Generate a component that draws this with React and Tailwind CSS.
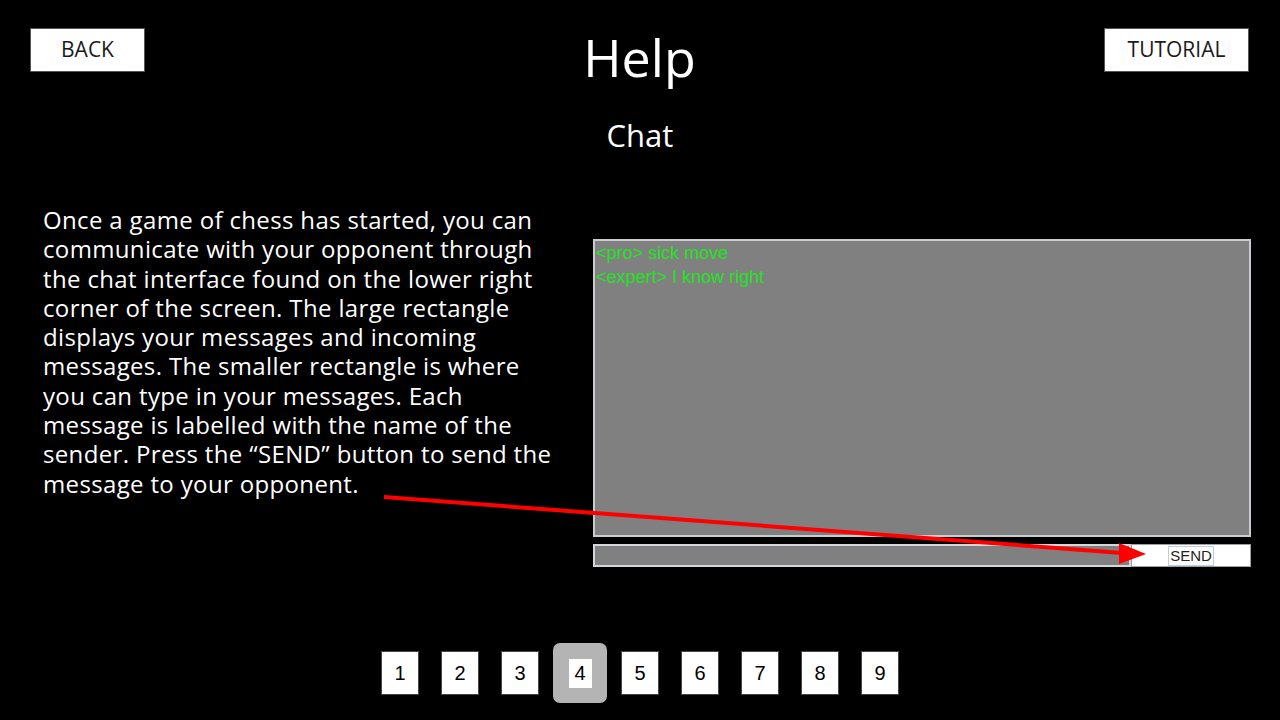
import React from 'react';

const lines = [
  'Once a game of chess has started, you can',
  'communicate with your opponent through',
  'the chat interface found on the lower right',
  'corner of the screen. The large rectangle',
  'displays your messages and incoming',
  'messages. The smaller rectangle is where',
  'you can type in your messages. Each',
  'message is labelled with the name of the',
  'sender. Press the \u201CSEND\u201D button to send the',
  'message to your opponent.',
];

const messages = [
  { from: 'pro', text: 'sick move' },
  { from: 'expert', text: 'I know right' },
];

const pages = [1, 2, 3, 4, 5, 6, 7, 8, 9];

function HeaderButton({ children, className = '' }) {
  return (
    <button
      className={`h-[44px] bg-white border border-[#555] text-[21px] text-[#1a1a1a] flex items-center justify-center ${className}`}
    >
      {children}
    </button>
  );
}

export default function App() {
  return (
    <div className="relative w-[1280px] h-[720px] bg-black overflow-hidden flex flex-col font-['Open_Sans',sans-serif] text-white">
      {/* Header */}
      <div className="grid grid-cols-[1fr_auto_1fr] items-start pl-[30px] pr-[31px] pt-[21px]">
        <HeaderButton className="justify-self-start mt-[7px] w-[115px]">BACK</HeaderButton>
        <h1 className="text-[52px] leading-[71px]">Help</h1>
        <HeaderButton className="justify-self-end mt-[7px] w-[145px]">TUTORIAL</HeaderButton>
      </div>

      <h2 className="mt-[22px] text-center text-[31px] leading-[42px]">Chat</h2>

      {/* Body */}
      <div className="mt-[49px] flex">
        <div className="ml-[43px] w-[520px] text-[24px] leading-[29.3px] tracking-[0.35px]">
          {lines.map(l => (
            <div key={l} className="whitespace-nowrap">{l}</div>
          ))}
        </div>

        <div className="ml-[30px] mt-[34px] w-[658px] flex flex-col font-['Liberation_Sans',Arial,sans-serif]">
          <div className="h-[298px] bg-[#808080] border-2 border-[#c8ccd0] px-px text-[18px] leading-[24px] text-[#1ee61e]">
            {messages.map(m => (
              <div key={m.from}>&lt;{m.from}&gt; {m.text}</div>
            ))}
          </div>
          <div className="mt-[7px] flex h-[23px]">
            <div className="w-[538px] bg-[#808080] border-2 border-[#d4d8dc]" />
            <button className="flex-1 bg-white border border-[#9aa0a6] flex items-center justify-center">
              <span className="border border-[#bcd0e4] px-px text-[15px] leading-[18px] text-[#222]">SEND</span>
            </button>
          </div>
        </div>
      </div>

      {/* Pagination */}
      <div className="mt-auto pb-[17px] flex justify-center font-['Liberation_Sans',Arial,sans-serif]">
        {pages.map(p => (
          <div key={p} className="w-[60px] h-[60px] flex items-center justify-center">
            {p === 4 ? (
              <div className="w-[54px] h-[60px] rounded-[7px] bg-[#b4b4b4] flex items-center justify-center">
                <div className="w-[23px] h-[29px] bg-white flex items-center justify-center text-[20px] text-black">{p}</div>
              </div>
            ) : (
              <div className="w-[38px] h-[44px] bg-white border border-[#444] flex items-center justify-center text-[20px] text-black">{p}</div>
            )}
          </div>
        ))}
      </div>

      {/* Annotation arrow */}
      <svg className="absolute inset-0 pointer-events-none" width="1280" height="720">
        <line x1="384" y1="497" x2="1122" y2="553" stroke="#ff0000" strokeWidth="4" />
        <polygon points="1119,543 1146,554 1119,564" fill="#ff0000" />
      </svg>
    </div>
  );
}
